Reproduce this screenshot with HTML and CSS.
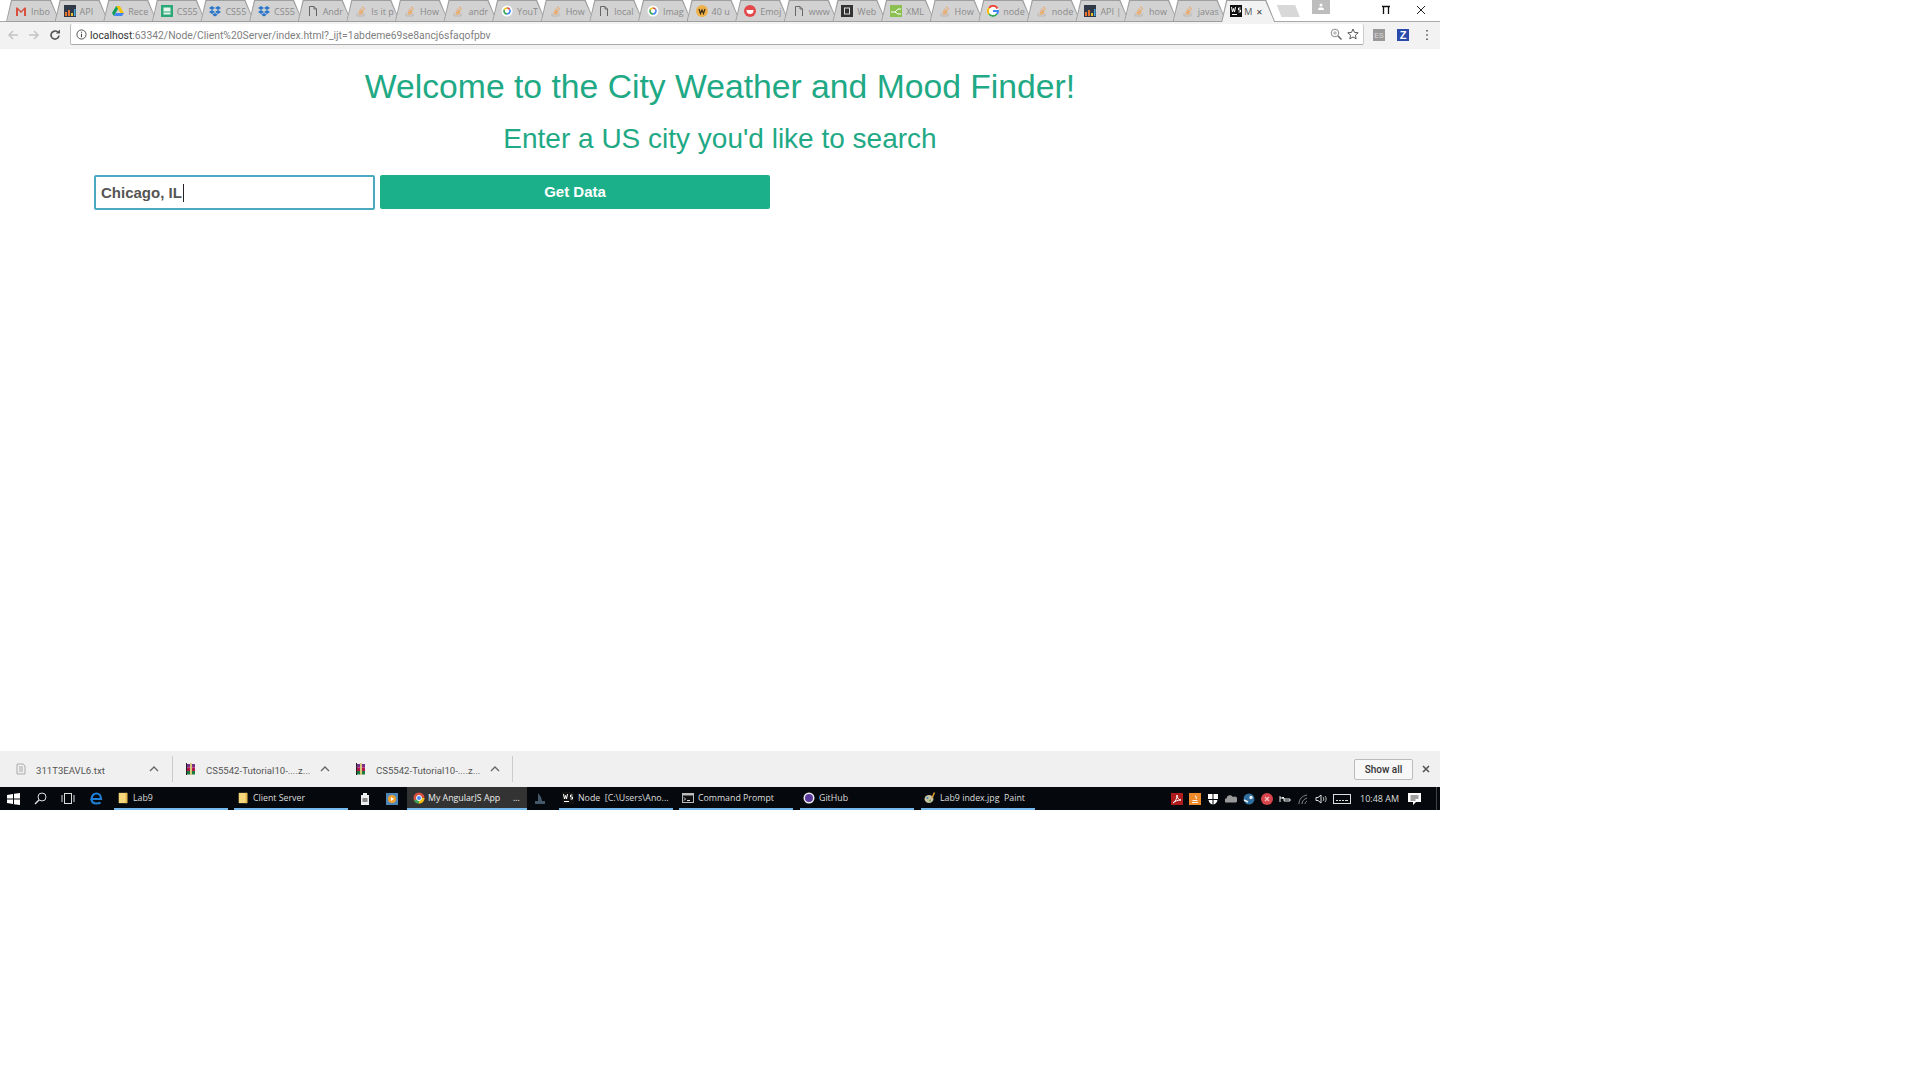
FILE: index.html
```html
<!DOCTYPE html>
<html lang="en">
<head>
    <meta charset="UTF-8">
    <title>My AngularJS App</title>
    <link rel="stylesheet" href="styles.css">
</head>
<body>
    <svg class="defs" width="0" height="0">
        <symbol id="so" viewBox="0 0 12 12">
            <path d="M2 8v3h7V8" fill="none" stroke="#b8b8b8"/>
            <path d="M3.500 9h4M3.700 7.300l4 .6M4.300 5.500l3.800 1.400M5.500 3.600l3.200 2.400M7.600 1.500l2 3.200" stroke="#f0a050" fill="none"/>
        </symbol>
        <symbol id="doc" viewBox="0 0 12 12">
            <path d="M2.500 11V1.500h4.500l2.500 2.500V11M7 1.500V4h2.500" fill="none" stroke="#666"/>
        </symbol>
        <symbol id="ring" viewBox="0 0 12 12">
            <circle cx="6" cy="6" r="5.500" fill="#fff"/>
            <path d="M6 3a3 3 0 0 1 2.600 1.500" stroke="#d9503f" stroke-width="1.600" fill="none"/>
            <path d="M8.600 4.500A3 3 0 0 1 6 9" stroke="#4285f4" stroke-width="1.600" fill="none"/>
            <path d="M6 9a3 3 0 0 1-2.600-4.500" stroke="#3aa757" stroke-width="1.600" fill="none"/>
            <path d="M3.400 4.500A3 3 0 0 1 6 3" stroke="#f4c20d" stroke-width="1.600" fill="none"/>
        </symbol>
        <symbol id="drop" viewBox="0 0 12 12">
            <path d="M3 1l3 2-3 2-3-2zM9 1l3 2-3 2-3-2zM3 5l3 2-3 2-3-2zM9 5l3 2-3 2-3-2zM3.200 9.800L6 8l2.800 1.800L6 11.600z" fill="#2a76c9"/>
        </symbol>
        <symbol id="wi" viewBox="0 0 12 12">
            <rect width="12" height="12" fill="#2f3947"/>
            <path d="M1 11V7h2v4zM4 11V5h2v6z" fill="#e8732c"/>
            <path d="M7 11V8h2v3z" fill="#e8c02c"/>
            <path d="M10 11V4h1.500v7z" fill="#4aa8e0"/>
        </symbol>
        <symbol id="ws" viewBox="0 0 12 12">
            <rect width="12" height="12" fill="#111"/>
            <rect x="2" y="9" width="5" height="1" fill="#fff"/>
            <path d="M1.500 2l1 5 1-3.500 1 3.500 1-5M10.500 3H8.500v2h2v2h-2" stroke="#fff" fill="none"/>
        </symbol>
        <symbol id="rar" viewBox="0 0 12 12">
            <rect x="2" y="1" width="8" height="3.500" fill="#7c2c8c"/>
            <rect x="2" y="4.500" width="8" height="3.500" fill="#b5174c"/>
            <rect x="2" y="8" width="8" height="3.500" fill="#1f7a3e"/>
            <rect x="5" y="0" width="2" height="12" fill="#d8c67a"/>
            <rect x="1" y="0" width="1" height="12" fill="#222"/>
        </symbol>
        <symbol id="folder" viewBox="0 0 12 14">
            <rect x="1" y="1" width="10" height="12" fill="#f6d77c"/>
            <rect x="9" y="1" width="2" height="12" fill="#e6b84c"/>
        </symbol>
    </svg>

    <div class="screen">
        <!-- tab strip -->
        <div class="tabstrip">
            <div class="tab"><svg class="fav" viewBox="0 0 12 12"><path d="M1 2.500V11h2V5l3 3 3-3v6h2V2.500H9.500L6 6 2.500 2.500z" fill="#d9503f"/></svg><span>Inbo</span></div>
            <div class="tab"><svg class="fav"><use href="#wi"/></svg><span>API</span></div>
            <div class="tab"><svg class="fav" viewBox="0 0 12 12"><path d="M4.200 1h3.600L12 8H8.400z" fill="#f4c20d"/><path d="M4.200 1L0 8l1.900 3L6 4z" fill="#0f9d58"/><path d="M1.900 11h8.200L12 8H3.800z" fill="#4285f4"/></svg><span>Rece</span></div>
            <div class="tab"><svg class="fav" viewBox="0 0 12 12"><rect width="12" height="12" fill="#2aa876"/><rect x="2.500" y="2.500" width="7" height="7" fill="#e8f5ef"/><rect x="2.500" y="6.500" width="7" height="1" fill="#2aa876"/></svg><span>CS55</span></div>
            <div class="tab"><svg class="fav"><use href="#drop"/></svg><span>CS55</span></div>
            <div class="tab"><svg class="fav"><use href="#drop"/></svg><span>CS55</span></div>
            <div class="tab"><svg class="fav"><use href="#doc"/></svg><span>Andr</span></div>
            <div class="tab"><svg class="fav"><use href="#so"/></svg><span>Is it p</span></div>
            <div class="tab"><svg class="fav"><use href="#so"/></svg><span>How</span></div>
            <div class="tab"><svg class="fav"><use href="#so"/></svg><span>andr</span></div>
            <div class="tab"><svg class="fav"><use href="#ring"/></svg><span>YouT</span></div>
            <div class="tab"><svg class="fav"><use href="#so"/></svg><span>How</span></div>
            <div class="tab"><svg class="fav"><use href="#doc"/></svg><span>local</span></div>
            <div class="tab"><svg class="fav"><use href="#ring"/></svg><span>Imag</span></div>
            <div class="tab"><svg class="fav" viewBox="0 0 12 12"><circle cx="6" cy="6" r="6" fill="#eeb04a"/><path d="M3 4l1.500 4.500L6 5l1.500 3.500L9 4" stroke="#3a2a10" stroke-width="1.200" fill="none"/></svg><span>40 u</span></div>
            <div class="tab"><svg class="fav" viewBox="0 0 12 12"><circle cx="6" cy="6" r="6" fill="#e3494b"/><path d="M2.500 5h7c0 3-1.500 4-3.500 4S2.500 8 2.500 5z" fill="#fff"/></svg><span>Emoj</span></div>
            <div class="tab"><svg class="fav"><use href="#doc"/></svg><span>www</span></div>
            <div class="tab"><svg class="fav" viewBox="0 0 12 12"><rect width="12" height="12" fill="#333"/><rect x="3.500" y="3" width="5" height="6" fill="none" stroke="#ddd"/></svg><span>Web</span></div>
            <div class="tab"><svg class="fav" viewBox="0 0 12 12"><rect width="12" height="12" fill="#8cc152"/><path d="M1 7h4l3-3h3M5 7l3 2h3" stroke="#fff" fill="none"/></svg><span>XML</span></div>
            <div class="tab"><svg class="fav"><use href="#so"/></svg><span>How</span></div>
            <div class="tab"><svg class="fav" viewBox="0 0 12 12"><circle cx="6" cy="6" r="6" fill="#fff"/><path d="M10.500 3.500A5 5 0 0 0 2 3" stroke="#ea4335" stroke-width="2" fill="none"/><path d="M2 3a5 5 0 0 0 0 6" stroke="#fbbc05" stroke-width="2" fill="none"/><path d="M2 9a5 5 0 0 0 8 0" stroke="#34a853" stroke-width="2" fill="none"/><path d="M6 6h5a5 5 0 0 1-1 3" stroke="#4285f4" stroke-width="2" fill="none"/></svg><span>node</span></div>
            <div class="tab"><svg class="fav"><use href="#so"/></svg><span>node</span></div>
            <div class="tab"><svg class="fav"><use href="#wi"/></svg><span>API |</span></div>
            <div class="tab"><svg class="fav"><use href="#so"/></svg><span>how</span></div>
            <div class="tab"><svg class="fav"><use href="#so"/></svg><span>javas</span></div>
            <div class="tab tab-active"><svg class="fav"><use href="#ws"/></svg><span>M</span><b class="tab-x">&#x2715;</b></div>
            <div class="new-tab"></div>
            <div class="user-badge"><svg width="10" height="10" viewBox="0 0 10 10"><circle cx="5" cy="3" r="1.500" fill="#fff"/><path d="M2 8c0-2 1-2.500 3-2.500S8 6 8 8z" fill="#fff"/></svg></div>
            <div class="win-btn win-restore"><svg width="10" height="10" viewBox="0 0 10 10"><path d="M1 1.500h8M2.500 1.500V9M7.500 1.500V9" stroke="#111" stroke-width="1.300" fill="none"/></svg></div>
            <div class="win-btn"><svg width="10" height="10" viewBox="0 0 10 10"><path d="M1 1l8 8M9 1l-8 8" stroke="#222" fill="none"/></svg></div>
        </div>

        <!-- address bar -->
        <div class="toolbar">
            <svg class="nav-arrow" viewBox="0 0 12 12"><path d="M11 6H2M6 2L2 6l4 4" stroke="#c4c4c4" stroke-width="1.500" fill="none"/></svg>
            <svg class="nav-arrow" viewBox="0 0 12 12"><path d="M1 6h9M6 2l4 4-4 4" stroke="#c4c4c4" stroke-width="1.500" fill="none"/></svg>
            <svg class="nav-arrow" viewBox="0 0 12 12"><path d="M10 6.500A4 4 0 1 1 8.800 3.200" stroke="#555" stroke-width="1.600" fill="none"/><path d="M7 4.500h4v-4z" fill="#555"/></svg>
            <div class="omnibox">
                <svg class="info" viewBox="0 0 12 12"><circle cx="6" cy="6" r="5" fill="none" stroke="#444"/><path d="M6 5.200V9M6 3v1.200" stroke="#444" stroke-width="1.200"/></svg>
                <span class="url"><span class="host">localhost</span>:63342/Node/Client%20Server/index.html?_ijt=1abdeme69se8ancj6sfaqofpbv</span>
                <svg class="omni-icon" viewBox="0 0 12 12"><circle cx="5" cy="5" r="3.800" fill="none" stroke="#888"/><path d="M8 8l3.500 3.500" stroke="#666" stroke-width="1.500"/><path d="M3 5h4M5 3v4" stroke="#aaa"/></svg>
                <svg class="omni-icon" viewBox="0 0 12 12"><path d="M6 1l1.500 3.400 3.700.4-2.800 2.400.8 3.600L6 9l-3.200 1.800.8-3.600L.8 4.800l3.700-.4z" fill="none" stroke="#555"/></svg>
            </div>
            <div class="ext ext-es">ES</div>
            <div class="ext ext-z">Z</div>
            <svg class="menu-dots" viewBox="0 0 4 12"><path d="M2 1v1.500M2 5.200v1.500M2 9.500V11" stroke="#555" stroke-width="1.600"/></svg>
        </div>

        <!-- page -->
        <main class="page">
            <h1>Welcome to the City Weather and Mood Finder!</h1>
            <h2>Enter a US city you'd like to search</h2>
            <div class="search-row">
                <div class="city-input">Chicago, IL<i class="caret"></i></div>
                <button class="get-btn">Get Data</button>
            </div>
        </main>

        <!-- downloads -->
        <div class="downloads">
            <div class="dl dl-first">
                <svg class="dl-icon" viewBox="0 0 12 12"><path d="M2 1h6l2 2v8H2zM4 4h4M4 6h4M4 8h4" fill="none" stroke="#aaa"/></svg>
                <span class="dl-name">311T3EAVL6.txt</span>
                <svg class="chev" viewBox="0 0 10 6"><path d="M1 5l4-4 4 4" fill="none" stroke="#666" stroke-width="1.300"/></svg>
            </div>
            <div class="dl dl-rar">
                <svg class="dl-icon"><use href="#rar"/></svg>
                <span class="dl-name">CS5542-Tutorial10-....z...</span>
                <svg class="chev" viewBox="0 0 10 6"><path d="M1 5l4-4 4 4" fill="none" stroke="#666" stroke-width="1.300"/></svg>
            </div>
            <div class="dl dl-rar dl-last">
                <svg class="dl-icon"><use href="#rar"/></svg>
                <span class="dl-name">CS5542-Tutorial10-....z...</span>
                <svg class="chev" viewBox="0 0 10 6"><path d="M1 5l4-4 4 4" fill="none" stroke="#666" stroke-width="1.300"/></svg>
            </div>
            <button class="show-all">Show all</button>
            <svg class="dl-close" viewBox="0 0 10 10"><path d="M2 2l6 6M8 2l-6 6" stroke="#555" stroke-width="1.600"/></svg>
        </div>

        <!-- taskbar -->
        <div class="taskbar">
            <div class="sys"><svg width="13" height="12" viewBox="0 0 13 12"><path d="M0 2l6-1v4.500H0zM7 .8L13 0v5.500H7zM0 6.500h6V11l-6-1zM7 6.500h6V12l-6-.8z" fill="#fff"/></svg></div>
            <div class="sys"><svg width="13" height="13" viewBox="0 0 13 13"><circle cx="8" cy="5" r="4" fill="none" stroke="#ddd"/><path d="M5 8l-4 4" stroke="#ddd" stroke-width="1.400"/></svg></div>
            <div class="sys"><svg width="14" height="11" viewBox="0 0 14 11"><rect x="3.500" y=".5" width="7" height="10" fill="none" stroke="#ddd"/><path d="M1 2v7M13 2v7" stroke="#ddd"/></svg></div>
            <div class="sys sys-edge"><svg width="13" height="13" viewBox="0 0 13 13"><path d="M1.500 7h9.500C11 3.500 9 1.500 6.500 1.500S2 3.500 1.500 7zM1.500 7c0 3 2 4.500 5 4.500 1.500 0 3-.4 4-1" fill="none" stroke="#1f7fd6" stroke-width="2.200"/></svg></div>
            <div class="task task-lab"><svg class="task-icon"><use href="#folder"/></svg>Lab9</div>
            <div class="task task-client"><svg class="task-icon"><use href="#folder"/></svg>Client Server</div>
            <div class="pin pin-note"><svg width="10" height="12" viewBox="0 0 10 12"><path d="M1 2h8v10H1zM3 0h4v3H3z" fill="#eee"/><path d="M2.500 6h5M2.500 8h5" stroke="#222"/></svg></div>
            <div class="pin pin-media"><svg width="12" height="12" viewBox="0 0 12 12"><rect width="12" height="12" fill="#4c86b8"/><circle cx="6" cy="6" r="4" fill="#f0a030"/><path d="M5 4l3 2-3 2z" fill="#fff"/></svg></div>
            <div class="task task-chrome"><svg class="task-icon" viewBox="0 0 12 12"><circle cx="6" cy="6" r="5.500" fill="#d9503f"/><path d="M6 6L1 8.500A5.500 5.500 0 0 0 6 11.500z" fill="#3aa757"/><path d="M6 6h5.500A5.500 5.500 0 0 1 6 11.500z" fill="#f4c20d"/><circle cx="6" cy="6" r="2.500" fill="#4285f4" stroke="#fff"/></svg><span class="task-label">My AngularJS App</span><span>...</span></div>
            <div class="pin pin-shadow"><svg width="12" height="13" viewBox="0 0 12 13"><path d="M4 1l3 4 1 4h3v3H1V9h3z" fill="#44586a"/></svg></div>
            <div class="task"><svg class="task-icon"><use href="#ws"/></svg>Node&nbsp; [C:\Users\Ano...</div>
            <div class="task task-cmd"><svg class="task-icon" viewBox="0 0 12 12"><rect x=".5" y="1.500" width="11" height="9" fill="#111" stroke="#bbb"/><rect x=".5" y="1.500" width="11" height="2" fill="#bbb"/><path d="M2 5.500l1.500 1.500L2 8.500M5 8.500h3" stroke="#ddd" fill="none"/></svg>Command Prompt</div>
            <div class="task task-git"><svg class="task-icon" viewBox="0 0 12 12"><circle cx="6" cy="6" r="5.500" fill="#eee"/><circle cx="6" cy="6" r="4" fill="#5a3a9c"/></svg>GitHub</div>
            <div class="task task-paint"><svg class="task-icon" viewBox="0 0 12 12"><ellipse cx="5" cy="7" rx="4.500" ry="4" fill="#c9c2a0"/><circle cx="3.500" cy="6" r="1" fill="#3a86c8"/><circle cx="6" cy="8.500" r="1" fill="#5aa84a"/><path d="M8 6l2.500-5.500" stroke="#e0a030" stroke-width="1.500"/></svg>Lab9 index.jpg&nbsp; Paint</div>
            <div class="tray">
                <svg class="tray-icon" viewBox="0 0 12 12"><rect width="12" height="12" fill="#b01c1c"/><path d="M2 10c3-2 4-5 4-8 0 3 2 5 4 5-3 0-6 1-8 3z" fill="none" stroke="#fff"/></svg>
                <svg class="tray-icon" viewBox="0 0 12 12"><rect width="12" height="12" fill="#ee8a2c"/><path d="M3 9.500h6M3.500 7.500h5M6.500 2.500l1 3.500" stroke="#fff" fill="none"/></svg>
                <svg class="tray-icon" viewBox="0 0 12 12"><path d="M1 1h4.500v5H1zM6.500 1H11v5H6.500zM1.500 7h4v4.500C3.500 11 2 9.500 1.500 7zM6.500 7h4c-.5 2.500-2 4-4 4.500z" fill="#fff"/></svg>
                <svg class="tray-icon" viewBox="0 0 12 12"><path d="M1 9.500a2 2 0 0 1 .5-4A3.500 3.500 0 0 1 8 4a2.800 2.800 0 0 1 3 5.500z" fill="#999"/></svg>
                <svg class="tray-icon" viewBox="0 0 12 12"><circle cx="6" cy="6" r="5.500" fill="#2f6f9f"/><circle cx="8" cy="4.500" r="1.700" fill="#eee"/><path d="M1 7l4 2" stroke="#eee" stroke-width="1.500"/></svg>
                <svg class="tray-icon" viewBox="0 0 12 12"><circle cx="6" cy="6" r="6" fill="#d8444c"/><path d="M4 4l4 4M8 4L4 8" stroke="#f4c0c0" stroke-width="1.300"/></svg>
                <svg class="tray-icon" viewBox="0 0 12 12"><path d="M1 3v6M1 5h4v3h6V6H5" stroke="#eee" fill="none"/><rect x="3" y="4" width="2" height="1.500" fill="#eee"/></svg>
                <svg class="tray-icon" viewBox="0 0 12 12"><path d="M2 11c0-5 3-8 8-9M5 11c0-3 2-5 5-6M8 11c0-1 .5-2 2-3" stroke="#888" fill="none"/></svg>
                <svg class="tray-icon" viewBox="0 0 12 12"><path d="M1 4.500h2L6 2v8L3 7.500H1z" fill="none" stroke="#ddd"/><path d="M8 4c1 1 1 3 0 4M10 3c1.500 1.500 1.500 4.500 0 6" stroke="#bbb" fill="none"/></svg>
                <svg class="tray-kbd" viewBox="0 0 18 10"><rect x=".5" y=".5" width="17" height="9" fill="none" stroke="#ddd"/><path d="M3 6.500h2M6 6.500h2M9 6.500h2M12 6.500h3" stroke="#ddd"/></svg>
                <span class="clock">10:48 AM</span>
                <svg class="tray-note" viewBox="0 0 13 12"><path d="M0 0h13v9H8l-3 3V9H0z" fill="#fff"/><path d="M2.500 3h8M2.500 5h8M2.500 7h5" stroke="#111" stroke-width=".8"/></svg>
                <div class="show-desktop"></div>
            </div>
        </div>
    </div>
</body>
</html>
```

FILE: styles.css
```css
body {
    margin: 0;
    background: #fff;
    font-family: "Liberation Sans", Arial, sans-serif;
}

.defs {
    display: block;
    height: 0;
}

.screen {
    width: 1440px;
    height: 810px;
    display: flex;
    flex-direction: column;
}

/* tabs */
.tabstrip {
    height: 22px;
    display: flex;
    padding-left: 6px;
    background: linear-gradient(#fff 21px, #a9a9a9 21px);
}

.tab {
    position: relative;
    isolation: isolate;
    width: 54px;
    height: 22px;
    flex: none;
    box-sizing: border-box;
    margin-right: -5.4px;
    display: flex;
    align-items: center;
    gap: 4px;
    padding: 0 0 0 9px;
    background: #9e9e9e;
    clip-path: polygon(5px 0, 45px 0, 54px 100%, 0 100%);
    font-family: "Open Sans", sans-serif;
    font-size: 9px;
    color: #8a8a8a;
    white-space: nowrap;
}

/* inner fill, leaves a 1px outline from the tab's own background */
.tab::before {
    content: "";
    position: absolute;
    inset: 1px 1px 1px 1px;
    z-index: -1;
    background: #d2d2d2;
    clip-path: polygon(5px 0, 43px 0, 52px 100%, 0 100%);
}

.fav {
    width: 12px;
    height: 12px;
    flex: none;
}

.tab-active::before {
    bottom: 0;
    background: #f2f2f2;
}

.tab-active {
    z-index: 1;
    gap: 2px;
    color: #555;
}

.tab-x {
    font-weight: normal;
    font-size: 8px;
    margin-left: 2px;
    color: #444;
}

.new-tab {
    width: 23px;
    height: 12px;
    margin: 5px 0 0 7px;
    background: #d8d8d8;
    clip-path: polygon(0 0, 80% 0, 100% 100%, 20% 100%);
}

.user-badge {
    width: 18px;
    height: 14px;
    margin-left: 12px;
    background: #bdbdbd;
    display: flex;
    align-items: center;
    justify-content: center;
}

.win-btn {
    width: 35px;
    height: 20px;
    display: flex;
    align-items: center;
    justify-content: center;
}

.win-restore {
    margin-left: 39px;
}

/* address bar */
.toolbar {
    height: 27px;
    box-sizing: border-box;
    display: flex;
    align-items: flex-start;
    padding: 2px 0 0 7px;
    background: #f2f2f2;
}

.nav-arrow {
    width: 12px;
    height: 12px;
    margin: 5px 9px 0 0;
}

.omnibox {
    width: 1294px;
    height: 21px;
    box-sizing: border-box;
    display: flex;
    align-items: center;
    padding: 0 4px 0 5px;
    background: #fff;
    border-left: 1px solid #bbb;
    border-bottom: 1px solid #aaa;
    border-right: 1px solid #ccc;
    border-radius: 2px;
}

.info {
    width: 11px;
    height: 11px;
    margin-right: 3px;
}

.url {
    flex: 1;
    padding-top: 2px;
    font-family: "Roboto", sans-serif;
    font-size: 10.35px;
    color: #808080;
    white-space: nowrap;
}

.host {
    color: #333;
}

.omni-icon {
    width: 12px;
    height: 12px;
    margin-left: 5px;
}

.ext {
    width: 12px;
    height: 12px;
    margin: 5px 0 0 9px;
    display: flex;
    align-items: center;
    justify-content: center;
    font-size: 7px;
}

.ext-es {
    background: #999;
    color: #ddd;
}

.ext-z {
    margin-left: 12px;
    background: #2b4bab;
    color: #fff;
    font-size: 11px;
    font-weight: bold;
}

.menu-dots {
    width: 4px;
    height: 12px;
    margin: 5px 0 0 16px;
}

/* page */
.page {
    flex: 1;
    display: flex;
    flex-direction: column;
    min-height: 0;
    text-align: center;
    color: #1fa985;
}

h1 {
    margin: 17px 0 0;
    font-size: 33.7px;
    line-height: 41px;
    font-weight: normal;
}

h2 {
    margin: 15px 0 0;
    font-size: 28px;
    line-height: 33px;
    font-weight: normal;
}

.search-row {
    display: flex;
    align-items: flex-start;
    gap: 5px;
    margin: 20px 0 0 94px;
}

.city-input {
    width: 281px;
    height: 35px;
    box-sizing: border-box;
    display: flex;
    align-items: center;
    padding-left: 5px;
    border: 2px solid #4aa8c0;
    border-radius: 2px;
    color: #555;
    font-size: 15px;
    font-weight: bold;
    background: #fff;
}

.caret {
    width: 1px;
    height: 18px;
    margin-left: 1px;
    background: #222;
}

.get-btn {
    width: 390px;
    height: 34px;
    padding: 0 0 2px;
    border: none;
    border-radius: 2px;
    background: #1cb08a;
    color: #fff;
    font-family: inherit;
    font-size: 15px;
    font-weight: bold;
}

/* downloads */
.downloads {
    height: 36px;
    flex: none;
    display: flex;
    align-items: center;
    background: #f0f0f0;
    font-family: "Roboto", sans-serif;
    font-size: 9.6px;
    color: #555;
}

.dl {
    height: 26px;
    box-sizing: border-box;
    display: flex;
    align-items: center;
}

.dl-first {
    width: 173px;
    padding-left: 15px;
    border-right: 1px solid #ccc;
}

.dl-rar {
    width: 170px;
    padding-left: 12px;
}

.dl-last {
    border-right: 1px solid #ccc;
}

.dl-icon {
    width: 12px;
    height: 12px;
    flex: none;
    margin-right: 9px;
}

.dl-name {
    width: 107px;
    padding-top: 2px;
    white-space: nowrap;
}

.dl-first .dl-name {
    width: 106px;
}

.chev {
    width: 10px;
    height: 6px;
    margin-left: 7px;
}

.show-all {
    width: 59px;
    height: 21px;
    margin-left: auto;
    padding: 0;
    background: #f8f8f8;
    border: 1px solid #bbb;
    border-radius: 2px;
    font-family: inherit;
    font-size: 10px;
    font-weight: 500;
    color: #333;
}

.dl-close {
    width: 10px;
    height: 10px;
    margin: 0 9px 0 8px;
}

/* taskbar */
.taskbar {
    height: 23px;
    flex: none;
    display: flex;
    background: #05090d;
    font-family: "Open Sans", sans-serif;
    font-size: 8.8px;
    color: #ddd;
    white-space: nowrap;
}

.sys {
    width: 27px;
    display: flex;
    align-items: center;
    justify-content: center;
}

.sys-edge {
    width: 30px;
    margin-right: 3px;
}

.task {
    width: 114px;
    height: 23px;
    box-sizing: border-box;
    display: flex;
    align-items: center;
    gap: 4px;
    padding-left: 3px;
    border-bottom: 2px solid #76b9ed;
}

.task-icon {
    width: 12px;
    height: 12px;
    flex: none;
}

.task-client,
.task-cmd {
    margin-left: 6px;
}

.task-git {
    margin-left: 7px;
}

.task-paint {
    margin: 0 6px 0 7px;
}

.task-chrome {
    width: 120px;
    gap: 3px;
    padding-left: 6px;
    background: #333;
    color: #eee;
}

.task-label {
    width: 82px;
}

.pin {
    display: flex;
    align-items: center;
    justify-content: center;
}

.pin-note {
    width: 34px;
}

.pin-media {
    width: 20px;
    margin-right: 5px;
}

.pin-shadow {
    width: 26px;
    margin-right: 6px;
}

.tray {
    flex: 1;
    display: flex;
    align-items: center;
    padding-left: 130px;
}

.tray-icon {
    width: 12px;
    height: 12px;
    flex: none;
    margin-right: 6px;
}

.tray-kbd {
    width: 18px;
    height: 10px;
}

.clock {
    margin-left: 9px;
    width: 37px;
    font-size: 9px;
}

.tray-note {
    width: 13px;
    height: 12px;
    margin-left: 11px;
}

.show-desktop {
    width: 1px;
    height: 23px;
    margin-left: 15px;
    background: #444;
}
```
